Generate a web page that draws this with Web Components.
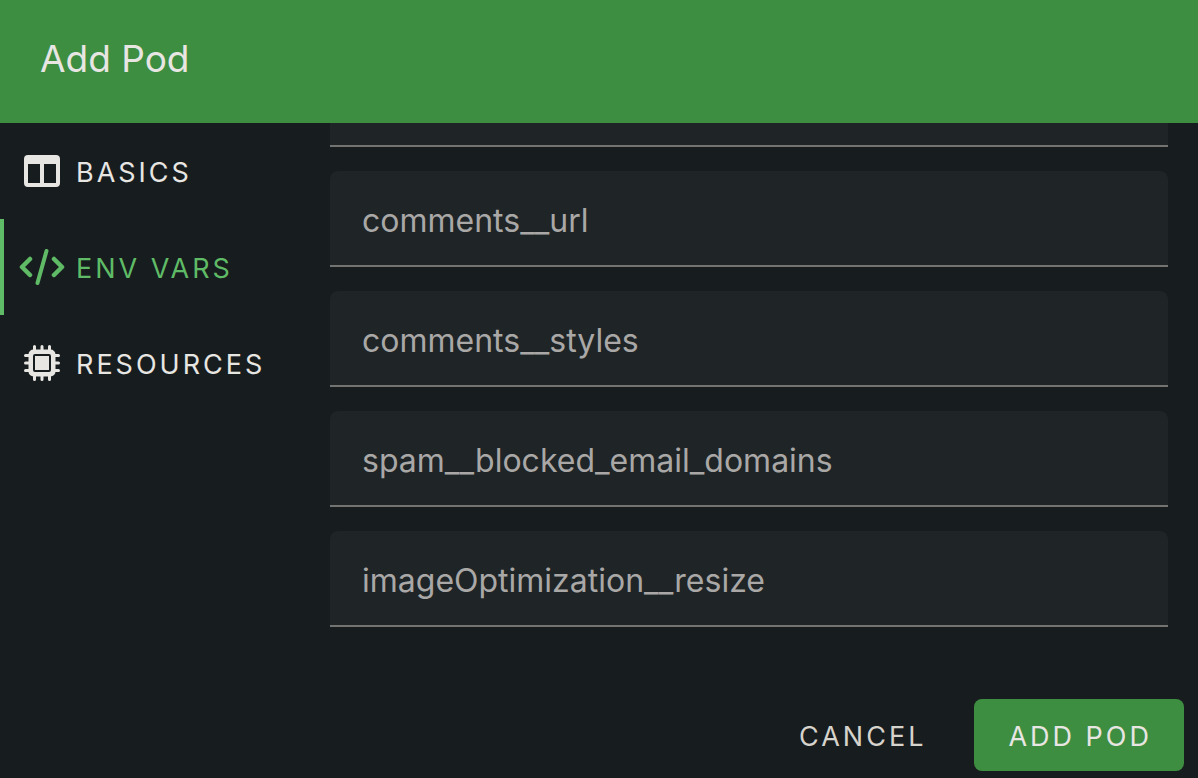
<!DOCTYPE html>
<html lang="en">
<head>
<meta charset="utf-8">
<meta name="viewport" content="width=device-width, initial-scale=1">
<title>Add Pod</title>
<style>
  body {
    margin: 0;
    background: #171c1e;
    font-family: Inter, "Liberation Sans", sans-serif;
    --surface: #171c1e;
    --primary: #3e8e41;
    --accent: #5fbb66;
    --text: #e8e6e3;
  }
</style>
</head>
<body>
<pod-dialog heading="Add Pod">
  <tab-item slot="tabs" icon="columns">BASICS</tab-item>
  <tab-item slot="tabs" icon="code" active>ENV VARS</tab-item>
  <tab-item slot="tabs" icon="chip">RESOURCES</tab-item>
  <text-field></text-field>
  <text-field name="comments__url">comments__url</text-field>
  <text-field name="comments__styles">comments__styles</text-field>
  <text-field name="spam__blocked_email_domains">spam__blocked_email_domains</text-field>
  <text-field name="imageOptimization__resize">imageOptimization__resize</text-field>
  <action-button slot="actions">CANCEL</action-button>
  <action-button slot="actions" primary>ADD POD</action-button>
</pod-dialog>

<script>
const icons = {
  columns: `<svg width="36" height="32" viewBox="0 0 36 32"><path fill="currentColor" fill-rule="evenodd" d="M4 0H32Q36 0 36 4V28Q36 32 32 32H4Q0 32 0 28V4Q0 0 4 0ZM4 9V28H16V9ZM20 9V28H32V9Z"/></svg>`,
  code: `<svg width="46" height="36" viewBox="0 0 46 36" fill="none" stroke="currentColor" stroke-width="4.500" stroke-linecap="round" stroke-linejoin="round"><path d="M11 10 3 18l8 8M35 10l8 8-8 8"/><path stroke-width="4" d="M27.500 2 18.500 34"/></svg>`,
  chip: `<svg width="36" height="36" viewBox="0 0 36 36"><path stroke="currentColor" stroke-width="3" stroke-linecap="round" d="M10.500 1.500v33M18 1.500v33M25.500 1.500v33M1.500 10.500h33M1.500 18h33M1.500 25.500h33"/><rect x="4.500" y="4.500" width="27" height="27" rx="5" fill="currentColor"/><rect x="10" y="10" width="16" height="16" rx="1" fill="currentColor" stroke="#171c1e" stroke-width="2"/></svg>`
};

class PodDialog extends HTMLElement {
  constructor() {
    super();
    this.attachShadow({ mode: "open" }).innerHTML = `
      <style>
        :host { display: flex; flex-direction: column; height: 100vh; background: var(--surface); color: var(--text); }
        header { background: var(--primary); padding: 35px 40px 40px; flex: none; }
        h1 { margin: 0; font-size: 37px; line-height: 48px; font-weight: 400; }
        main { display: flex; flex: 1; min-height: 0; }
        nav { width: 300px; flex: none; }
        form { flex: 1; min-width: 0; display: flex; flex-direction: column; justify-content: flex-end; gap: 24px; padding: 0 30px 57px; overflow: hidden; }
        footer { flex: none; display: flex; justify-content: flex-end; gap: 16px; padding: 15px 14px 7px; }
      </style>
      <header><h1></h1></header>
      <main>
        <nav role="tablist" aria-label="Pod settings"><slot name="tabs"></slot></nav>
        <form><slot></slot></form>
      </main>
      <footer><slot name="actions"></slot></footer>`;
  }
  connectedCallback() {
    this.shadowRoot.querySelector("h1").textContent = this.getAttribute("heading");
  }
}

class TabItem extends HTMLElement {
  constructor() {
    super();
    this.attachShadow({ mode: "open" }).innerHTML = `
      <style>
        :host { display: block; }
        button { box-sizing: border-box; width: 100%; height: 96px; display: flex; align-items: center; gap: 11px; margin: 0; padding: 0 0 0 15px; border: 0; border-left: 4px solid transparent; background: none; color: var(--text); font: 400 27px/40px Inter, "Liberation Sans", sans-serif; letter-spacing: 3px; text-align: left; white-space: nowrap; cursor: pointer; }
        :host([active]) button { color: var(--accent); border-left-color: var(--accent); }
        .icon { width: 46px; height: 40px; flex: none; display: flex; align-items: center; justify-content: center; }
        .text { padding-top: 4px; }
        svg { display: block; flex: none; }
      </style>
      <button type="button" role="tab"><span class="icon" aria-hidden="true"></span><span class="text"><slot></slot></span></button>`;
  }
  connectedCallback() {
    this.shadowRoot.querySelector(".icon").innerHTML = icons[this.getAttribute("icon")];
    this.shadowRoot.querySelector("button").setAttribute("aria-selected", this.hasAttribute("active"));
  }
}

class TextField extends HTMLElement {
  constructor() {
    super();
    this.attachShadow({ mode: "open" }).innerHTML = `
      <style>
        :host { display: block; flex: none; }
        .field { display: grid; grid-template-columns: minmax(0, 1fr); }
        label, input { grid-area: 1 / 1; box-sizing: border-box; height: 96px; font: 400 32px/40px Inter, "Liberation Sans", sans-serif; }
        label { z-index: 1; pointer-events: none; color: #a9a8a6; padding: 30px 32px 26px; white-space: nowrap; }
        input { width: 100%; margin: 0; padding: 0 32px; border: 0; border-bottom: 2px solid #737372; border-radius: 8px 8px 0 0; background: #1f2426; color: var(--text); outline: none; }
        .field:focus-within label { color: var(--accent); }
        input:focus { border-color: var(--accent); }
      </style>
      <div class="field"><label for="box"><slot></slot></label><input id="box" type="text"></div>`;
  }
  connectedCallback() {
    this.shadowRoot.querySelector("input").name = this.getAttribute("name") || "";
  }
}

class ActionButton extends HTMLElement {
  constructor() {
    super();
    this.attachShadow({ mode: "open" }).innerHTML = `
      <style>
        :host { display: block; }
        button { height: 72px; margin: 0; padding: 4px 32px 0 34px; border: 0; border-radius: 8px; background: none; color: #d5d3cc; font: 400 27px/40px Inter, "Liberation Sans", sans-serif; letter-spacing: 3px; cursor: pointer; }
        :host([primary]) button { background: var(--primary); color: var(--text); }
      </style>
      <button type="button"><slot></slot></button>`;
  }
}

customElements.define("pod-dialog", PodDialog);
customElements.define("tab-item", TabItem);
customElements.define("text-field", TextField);
customElements.define("action-button", ActionButton);
</script>
</body>
</html>
